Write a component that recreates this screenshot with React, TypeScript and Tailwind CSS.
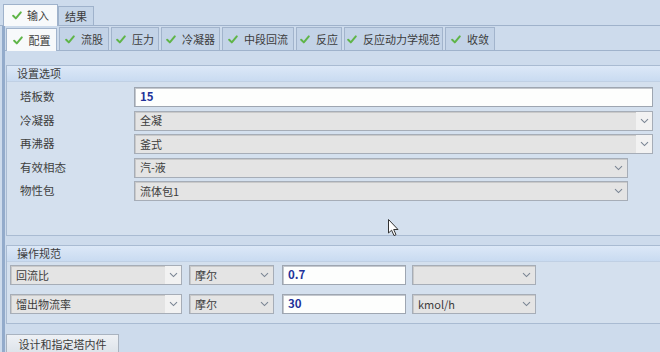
import React from 'react';

const font = { fontFamily: '"Noto Sans CJK SC", "Noto Sans", sans-serif' };

function Tick() {
  return (
    <svg width="10" height="9" viewBox="0 0 10 9" className="shrink-0">
      <path d="M1.2 4.8 L3.8 7.4 L8.8 1.4" fill="none" stroke="#5fb548" strokeWidth="2" strokeLinecap="round" strokeLinejoin="round" />
    </svg>
  );
}

function Chevron({ color = '#7a8594' }: { color?: string }) {
  return (
    <svg width="9" height="6" viewBox="0 0 9 6">
      <path d="M1 1.2 L4.5 4.6 L8 1.2" fill="none" stroke={color} strokeWidth="1.1" />
    </svg>
  );
}

function TopTab({ label, active, check }: { label: string; active?: boolean; check?: boolean }) {
  return (
    <div
      className={`flex items-center gap-[5px] border border-b-0 border-[#9fb2cb] ${
        active ? 'h-[22px] bg-[#f7f9fb] px-[8px] -mb-px' : 'h-[19px] bg-[#c5d5e8] px-[6px]'
      } text-[11px] text-[#3c3c3c]`}
    >
      {check && <Tick />}
      <span>{label}</span>
    </div>
  );
}

function SubTab({ label, active, w }: { label: string; active?: boolean; w: string }) {
  return (
    <div
      className={`flex items-center justify-center gap-[6px] h-[23px] border border-b-0 border-[#a2b4cc] ${w} ${
        active ? 'bg-[#f7f9fb] -mb-px' : 'bg-[#c3d3e7]'
      } text-[11px] text-[#3c3c3c]`}
    >
      <Tick />
      <span>{label}</span>
    </div>
  );
}

function Combo({ value, w, btn }: { value?: string; w: string; btn?: boolean }) {
  return (
    <div className={`flex h-[20px] ${w} border border-[#a6adb7] bg-[#e4e4e4] shadow-[inset_1px_1px_0_#c9c9c9]`}>
      <div className="flex-1 flex items-center pl-[5px] text-[11px] text-[#3c3c3c] truncate">{value}</div>
      <div className={`flex items-center justify-center ${btn ? 'w-[16px] bg-[#f2f2f2]' : 'w-[18px]'}`}>
        <Chevron />
      </div>
    </div>
  );
}

function TextBox({ value, w }: { value: string; w: string }) {
  return (
    <div className={`flex items-center h-[20px] ${w} border border-[#9ea6b1] bg-[#fdfefd] shadow-[inset_1px_1px_0_#c4c8ce] pl-[5px] text-[11.5px] font-bold text-[#22329a]`}>
      {value}
    </div>
  );
}

function GroupHeader({ title }: { title: string }) {
  return (
    <div className="h-[16px] flex items-center pl-[10px] bg-gradient-to-b from-[#dce8f7] to-[#c9dbf1] border-b border-[#c0d0e4] text-[11px] text-[#3c3c3c]">
      {title}
    </div>
  );
}

export default function App() {
  const rows: { label: string; el: React.ReactNode }[] = [
    { label: '塔板数', el: <TextBox value="15" w="w-[519px]" /> },
    { label: '冷凝器', el: <Combo value="全凝" w="w-[519px]" btn /> },
    { label: '再沸器', el: <Combo value="釜式" w="w-[519px]" btn /> },
    { label: '有效相态', el: <Combo value="汽-液" w="w-[494px]" /> },
    { label: '物性包', el: <Combo value="流体包1" w="w-[494px]" /> },
  ];

  return (
    <div className="relative w-[660px] h-[352px] overflow-hidden bg-[#cddbec]" style={font}>
      {/* top tabs */}
      <div className="flex items-end h-[26px] pl-[3px] pt-[4px] border-b border-[#9fb2cb]">
        <TopTab label="输入" active check />
        <TopTab label="结果" />
      </div>

      <div className="ml-[2px] border-l-[3px] border-[#93abcb] h-full">
        {/* sub tabs */}
        <div className="flex items-end gap-[2px] h-[25px] pl-[1px] border-b border-[#9fb2cb]">
          <SubTab label="配置" active w="w-[51px]" />
          <SubTab label="流股" w="w-[50px]" />
          <SubTab label="压力" w="w-[48px]" />
          <SubTab label="冷凝器" w="w-[59px]" />
          <SubTab label="中段回流" w="w-[72px]" />
          <SubTab label="反应" w="w-[46px]" />
          <SubTab label="反应动力学规范" w="w-[99px]" />
          <SubTab label="收敛" w="w-[50px]" />
        </div>

        <div className="pl-[1px] pt-[14px]">
          {/* group 1 */}
          <div className="h-[171px] w-[660px] border border-r-0 border-[#a9bbd2] bg-[#d4e0ee]">
            <GroupHeader title="设置选项" />
            <div className="flex flex-col gap-[3.5px] pt-[5px]">
              {rows.map((r) => (
                <div key={r.label} className="flex items-center">
                  <div className="w-[127px] pl-[13px] text-[11.5px] text-[#404040]">{r.label}</div>
                  {r.el}
                </div>
              ))}
            </div>
          </div>

          {/* group 2 */}
          <div className="mt-[9px] h-[79px] w-[660px] border border-r-0 border-[#a9bbd2] bg-[#d4e0ee]">
            <GroupHeader title="操作规范" />
            <div className="flex flex-col gap-[9px] pt-[3px] pl-[3px]">
              <div className="flex items-center">
                <Combo value="回流比" w="w-[172px]" btn />
                <div className="w-[7px]" />
                <Combo value="摩尔" w="w-[85px]" />
                <div className="w-[8px]" />
                <TextBox value="0.7" w="w-[124px]" />
                <div className="w-[6px]" />
                <Combo w="w-[124px]" />
              </div>
              <div className="flex items-center">
                <Combo value="馏出物流率" w="w-[172px]" btn />
                <div className="w-[7px]" />
                <Combo value="摩尔" w="w-[85px]" />
                <div className="w-[8px]" />
                <TextBox value="30" w="w-[124px]" />
                <div className="w-[6px]" />
                <Combo value="kmol/h" w="w-[124px]" />
              </div>
            </div>
          </div>

          {/* button */}
          <div className="mt-[10px] flex items-center justify-center w-[113px] h-[20px] border border-[#a9b3c0] bg-gradient-to-b from-[#eef1f5] to-[#dde3ea] text-[11px] text-[#3c3c3c]">
            设计和指定塔内件
          </div>
        </div>
      </div>

      {/* mouse cursor */}
      <svg className="absolute left-[388px] top-[219px]" width="12" height="18" viewBox="0 0 12 18">
        <path d="M0.5 0.5 L0.5 14 L3.6 11.2 L6 16.6 L8 15.7 L5.7 10.5 L10 10.5 Z" fill="#fff" stroke="#333" strokeWidth="1" strokeLinejoin="round" />
      </svg>
    </div>
  );
}
